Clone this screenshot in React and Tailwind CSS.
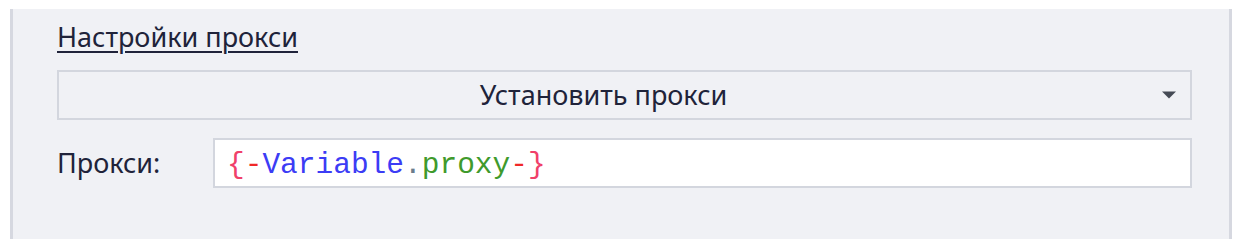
import React from "react";

const ProxySettings = () => {
  return (
    <div className="h-[250px] bg-white pt-[9px] pl-[10px]">
      <div
        className="w-[1222px] h-[230px] bg-[#f0f1f5] border-l-[3px] border-r-[3px] border-[#d6d8e0] pl-[44px] pr-[37px] pt-[12px]"
        style={{ fontFamily: '"Noto Sans", sans-serif' }}
      >
        <div className="text-[27px] leading-[32px] text-[#20233a]">
          <span className="underline decoration-2 underline-offset-[4px]">
            Настройки прокси
          </span>
        </div>

        <div className="mt-[17px] h-[50px] flex items-center border-2 border-[#d3d6de] bg-[#f0f1f5]">
          <div className="flex-1 text-center text-[27px] leading-[32px] text-[#20233a]">
            Установить прокси
          </div>
          <div className="w-[42px] h-full flex items-center justify-center">
            <svg width="16" height="8" viewBox="0 0 16 8">
              <path d="M1 0.5 L15 0.5 L8 7.5 Z" fill="#454a55" />
            </svg>
          </div>
        </div>

        <div className="mt-[18px] flex items-center">
          <div className="w-[156px] text-[27px] leading-[32px] text-[#20233a]">
            Прокси:
          </div>
          <div className="flex-1 h-[50px] flex items-center border-2 border-[#d3d6de] bg-white pl-[12px]">
            <span
              className="text-[29.5px] leading-[32px] pt-[3px]"
              style={{ fontFamily: '"Liberation Mono", monospace' }}
            >
              <span className="text-[#f0406a]">{"{"}</span>
              <span className="text-[#f02828]">-</span>
              <span className="text-[#3c3cf5]">Variable</span>
              <span className="text-[#6b7d8c]">.</span>
              <span className="text-[#3f9a2c]">proxy</span>
              <span className="text-[#f02828]">-</span>
              <span className="text-[#f0406a]">{"}"}</span>
            </span>
          </div>
        </div>
      </div>
    </div>
  );
};

export default function App() {
  return <ProxySettings />;
}
